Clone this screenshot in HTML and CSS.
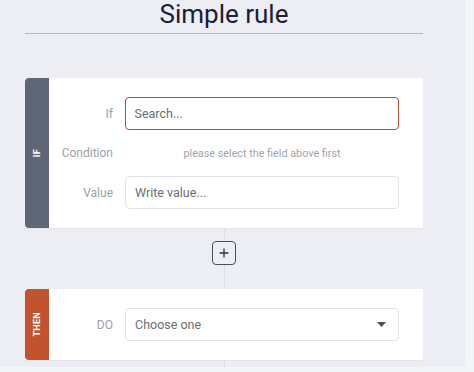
FILE: index.html
```html
<!DOCTYPE html>
<html>
<head>
<meta charset="utf-8">
<link rel="stylesheet" href="styles.css">
</head>
<body>
<div class="page">
  <h1 class="title">Simple rule</h1>
  <div class="rule"></div>
  <div class="card">
    <div class="strip strip-if"><span>IF</span></div>
    <div class="card-body">
      <div class="row">
        <div class="label">If</div>
        <div class="input input-active">Search...</div>
      </div>
      <div class="row row-text">
        <div class="label">Condition</div>
        <div class="hint">please select the field above first</div>
      </div>
      <div class="row">
        <div class="label">Value</div>
        <div class="input">Write value...</div>
      </div>
    </div>
  </div>
  <div class="connector">
    <div class="plus">
      <svg width="12" height="12" viewBox="0 0 12 12"><path d="M6 1.5v9M1.5 6h9" stroke="#2f3440" stroke-width="1.3" fill="none"/></svg>
    </div>
  </div>
  <div class="card">
    <div class="strip strip-then"><span>THEN</span></div>
    <div class="card-body">
      <div class="row">
        <div class="label">DO</div>
        <div class="input select">Choose one
          <svg class="caret" width="9" height="5" viewBox="0 0 9 5"><path d="M0 0h9L4.5 5z" fill="#4a4d55"/></svg>
        </div>
      </div>
    </div>
  </div>
  <div class="tail"></div>
</div>
</body>
</html>
```
FILE: styles.css
```css
html, body {
  margin: 0;
  padding: 0;
}
body {
  background: #f4f5f9;
  font-family: Roboto, "Liberation Sans", sans-serif;
}
.page {
  width: 398px;
  height: 367px;
  padding: 0 42px 0 25px;
  background: #eceef4;
  overflow: hidden;
}
.title {
  margin: 0;
  height: 33px;
  font-size: 26px;
  font-weight: 400;
  line-height: 28px;
  text-align: center;
  color: #1c1d3b;
}
.rule {
  height: 1px;
  background: #b4b6c6;
  margin-bottom: 44px;
}
.card {
  display: flex;
  background: #fff;
  box-shadow: 0 1px 1px rgba(0,0,0,0.04);
}
.strip {
  width: 24px;
  border-radius: 4px 0 0 4px;
  display: flex;
  align-items: center;
  justify-content: center;
}
.strip span {
  writing-mode: vertical-rl;
  transform: rotate(180deg);
  color: #fff;
  font-size: 9px;
  font-weight: 700;
  letter-spacing: 0.3px;
}
.strip-if { background: #5f6777; }
.strip-then { background: #c2532f; }
.card-body {
  flex: 1;
  padding: 19px 24px 19px 0;
  display: flex;
  flex-direction: column;
  gap: 11px;
}
.row {
  display: flex;
  align-items: center;
  gap: 12px;
  height: 33px;
}
.row-text { height: 24px; }
.label {
  width: 64px;
  text-align: right;
  font-size: 12px;
  color: #9d9fa8;
}
.input {
  flex: 1;
  height: 33px;
  box-sizing: border-box;
  border: 1px solid #e2e3e8;
  border-radius: 4px;
  padding: 0 9px;
  display: flex;
  align-items: center;
  font-size: 12.5px;
  color: #6c6e76;
}
.input-active {
  border: 1.5px solid #c8462b;
  padding-left: 8.5px;
}
.select { justify-content: space-between; padding-right: 12px; }
.hint {
  flex: 1;
  text-align: center;
  font-size: 10.8px;
  color: #a2a4ac;
}
.connector {
  height: 61px;
  padding-top: 13px;
  box-sizing: border-box;
  display: flex;
  justify-content: center;
  align-items: flex-start;
  background: linear-gradient(#dcdfe8, #dcdfe8) no-repeat 199px 0 / 1px 100%;
}
.plus {
  width: 22px;
  height: 22px;
  border: 1px solid #4a4e58;
  border-radius: 4px;
  display: flex;
  align-items: center;
  justify-content: center;
  background: #eceef4;
}
.plus svg { display: block; }
.tail {
  height: 20px;
  background: linear-gradient(#dcdfe8, #dcdfe8) no-repeat 199px 0 / 1px 100%;
}
```
